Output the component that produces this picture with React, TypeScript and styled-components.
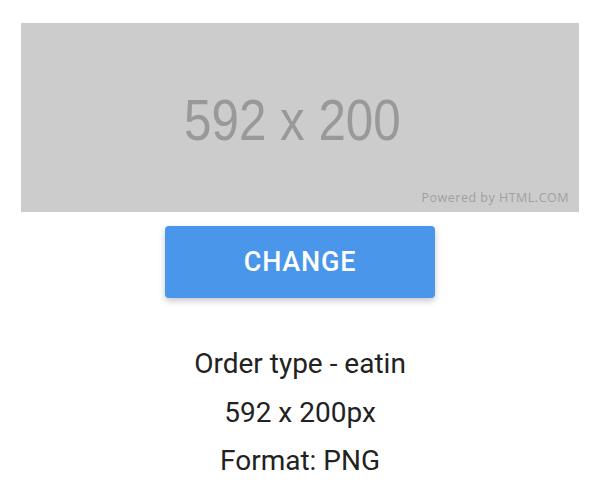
import React from "react";
import styled, { createGlobalStyle } from "styled-components";

const GlobalStyle = createGlobalStyle`
  body {
    margin: 0;
    background: #ffffff;
    font-family: Roboto, "Noto Sans", Arial, sans-serif;
  }
`;

const Page = styled.div`
  width: 606px;
  display: flex;
  flex-direction: column;
  align-items: center;
  padding-top: 23px;
`;

const Placeholder = styled.div`
  width: 558px;
  height: 189px;
  margin-left: -6px;
  background: #cccccc;
  display: flex;
  align-items: center;
  justify-content: center;
  position: relative;
`;

const PlaceholderLabel = styled.span`
  font-family: "Liberation Sans", Arial, sans-serif;
  font-size: 58px;
  color: #999999;
  transform: scaleX(0.85);
  margin-left: -16px;
  margin-top: 3px;
  white-space: nowrap;
`;

const Credit = styled.span`
  position: absolute;
  right: 10px;
  bottom: 6px;
  font-family: "Open Sans", "Noto Sans", sans-serif;
  font-size: 12.5px;
  letter-spacing: 0.5px;
  color: #a0a0a0;
`;

const ChangeButton = styled.button`
  margin-top: 14px;
  margin-left: -6px;
  width: 270px;
  height: 72px;
  border: none;
  border-radius: 4px;
  background: #4a96ea;
  color: #ffffff;
  font-family: Roboto, sans-serif;
  font-weight: 500;
  font-size: 27px;
  letter-spacing: 0.8px;
  box-shadow: 0 3px 6px rgba(0, 0, 0, 0.22);
  cursor: pointer;
`;

const Details = styled.div`
  margin-top: 42px;
  margin-left: -6px;
  display: flex;
  flex-direction: column;
  align-items: center;
`;

const DetailLine = styled.div`
  font-family: Roboto, sans-serif;
  font-size: 28px;
  line-height: 48.5px;
  color: #222222;
`;

const App: React.FC = () => {
  return (
    <>
      <GlobalStyle />
      <Page>
        <Placeholder>
          <PlaceholderLabel>592 x 200</PlaceholderLabel>
          <Credit>Powered by HTML.COM</Credit>
        </Placeholder>
        <ChangeButton>CHANGE</ChangeButton>
        <Details>
          <DetailLine>Order type - eatin</DetailLine>
          <DetailLine>592 x 200px</DetailLine>
          <DetailLine>Format: PNG</DetailLine>
        </Details>
      </Page>
    </>
  );
};

export default App;
